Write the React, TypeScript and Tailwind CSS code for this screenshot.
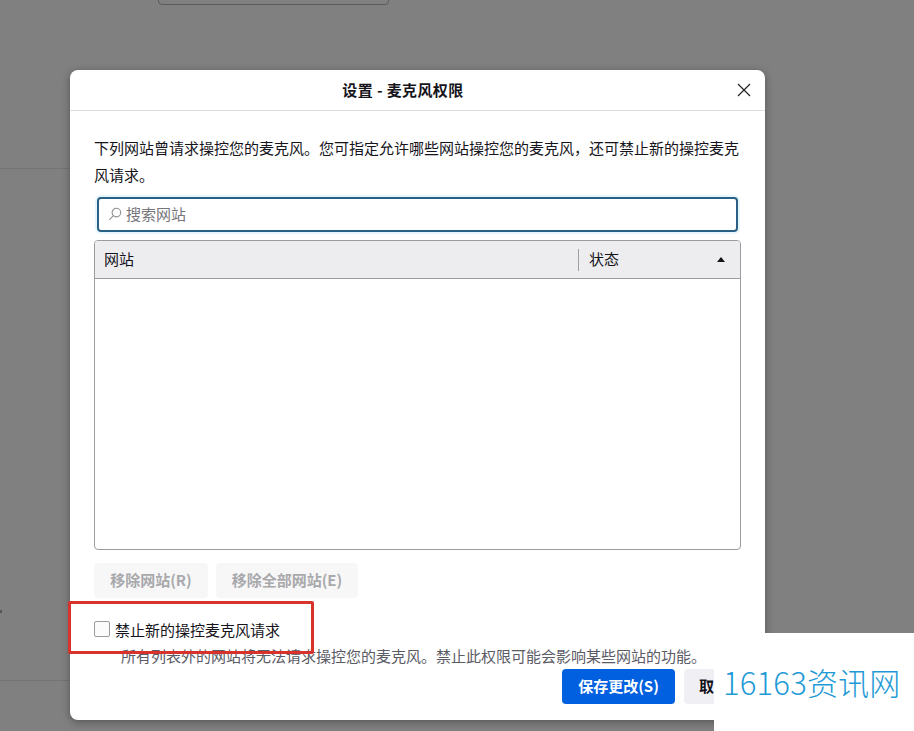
import React from "react";

const cjk = { fontFamily: '"Noto Sans CJK SC", "Liberation Sans", sans-serif' };

function App() {
  return (
    <div className="relative h-[731px] w-[914px] overflow-hidden bg-[#808080] text-[15px] text-[#15141a]" style={cjk}>
      {/* dimmed page behind the dialog */}
      <div className="absolute left-[158px] top-[-30px] h-[35px] w-[231px] rounded-[4px] border border-[#5c5c5c]" />
      <div className="absolute left-0 top-[168px] h-px w-[70px] bg-[#747474]" />
      <div className="absolute left-0 top-[680px] h-px w-[70px] bg-[#747474]" />
      <div className="absolute left-0 top-[610px] h-[3px] w-[2px] bg-[#555555]" />

      {/* dialog */}
      <div className="absolute left-[70px] top-[70px] flex h-[650px] w-[695px] flex-col rounded-[8px] bg-white shadow-[0_2px_8px_rgba(0,0,0,0.35)]">
        <div className="relative flex h-[41px] shrink-0 items-center justify-center border-b border-[#dcdcdc] pb-[2px] pr-[29px]">
          <span className="text-[15px] font-bold leading-none tracking-[0.4px]">设置 - 麦克风权限</span>
          <svg className="absolute right-[14px] top-[13px]" width="14" height="14" viewBox="0 0 14 14" fill="none" stroke="#222222" strokeWidth="1.2">
            <path d="M1 1L13 13M13 1L1 13" />
          </svg>
        </div>

        <div className="flex flex-1 flex-col pl-[24px] pr-[24px]">
          <p className="mt-[23px] w-[650px] text-[15px] leading-[27px]">
            下列网站曾请求操控您的麦克风。您可指定允许哪些网站操控您的麦克风，还可禁止新的操控麦克风请求。
          </p>
          <div className="ml-[3px] mt-[9px] flex h-[35px] w-[641px] items-center rounded-[4px] border-2 border-[#2a6085] pb-[2px] pl-[9px] shadow-[0_0_0_2px_#e6f6fc]">
            <svg width="14" height="14" viewBox="0 0 14 14" fill="none" stroke="#8f8f8f" strokeWidth="1.1">
              <circle cx="8.4" cy="5.6" r="4.3" />
              <path d="M5.2 8.8L1.2 12.8" />
            </svg>
            <span className="ml-[4px] text-[15px] leading-none text-[#77767c]">搜索网站</span>
          </div>

          <div className="mt-[8px] flex h-[310px] w-[647px] flex-col rounded-[4px] border border-[#9c9c9f]">
            <div className="flex h-[38px] shrink-0 items-center rounded-t-[3px] border-b border-[#9c9c9f] bg-[#ededf0]">
              <span className="ml-[9px] mb-[2px] w-[474px] text-[15px] leading-none">网站</span>
              <div className="h-[22px] w-px bg-[#a0a0a3]" />
              <span className="ml-[10px] mb-[2px] text-[15px] leading-none">状态</span>
              <svg className="ml-auto mr-[15px]" width="8" height="5" viewBox="0 0 8 5" fill="#15141a">
                <path d="M4 0L8 5H0Z" />
              </svg>
            </div>
          </div>

          <div className="mt-[13px] flex gap-[8px]">
            <div className="flex h-[35px] w-[114px] items-center justify-center rounded-[4px] bg-[#f7f7f8] pb-[1px] text-[15px] font-bold text-[#a9a9ac]">移除网站(R)</div>
            <div className="flex h-[35px] w-[142px] items-center justify-center rounded-[4px] bg-[#f7f7f8] pb-[1px] text-[15px] font-bold text-[#a9a9ac]">移除全部网站(E)</div>
          </div>

          <div className="mt-[23px] flex h-[16px] items-center">
            <div className="h-[16px] w-[16px] rounded-[2px] border border-[#9a9a9f] bg-[#fbfbfb]" />
            <span className="ml-[5px] text-[15px] leading-none">禁止新的操控麦克风请求</span>
          </div>
          <p className="ml-[27px] mt-[11px] text-[15px] leading-none text-[#5b5b66]">
            所有列表外的网站将无法请求操控您的麦克风。禁止此权限可能会影响某些网站的功能。
          </p>
          <div className="mt-[6px] flex justify-end gap-[9px]">
            <div className="flex h-[35px] w-[113px] items-center justify-center rounded-[4px] bg-[#0060df] pb-[1px] text-[15px] font-bold text-white">保存更改(S)</div>
            <div className="flex h-[35px] w-[57px] items-center justify-start rounded-[4px] bg-[#f0f0f4] pb-[1px] pl-[15px] text-[15px] font-bold">取</div>
          </div>
        </div>
      </div>

      {/* red annotation box */}
      <div className="absolute left-[68px] top-[601px] h-[53px] w-[246px] rounded-[2px] border-[3px] border-[#d8322c]" />

      {/* watermark */}
      <div className="absolute left-[714px] top-[633px] flex h-[98px] w-[200px] items-start bg-white pl-[9px] pt-[29px] text-[31px] font-light leading-[40px] tracking-[0.2px] text-[#1d9ad6]">
        16163资讯网
      </div>
    </div>
  );
}

export default App;
